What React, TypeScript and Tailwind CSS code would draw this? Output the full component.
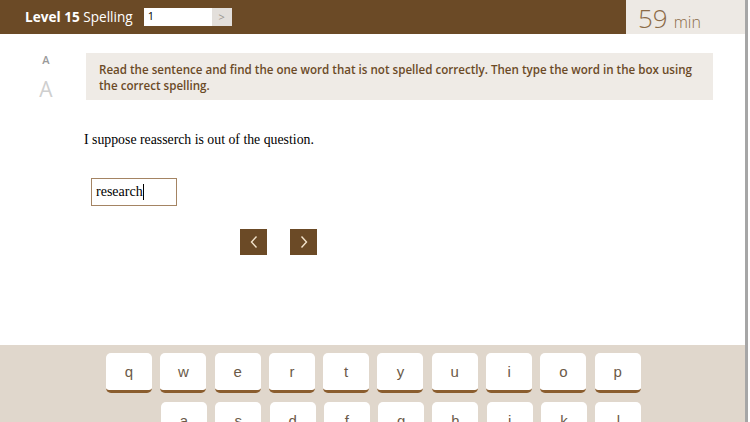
const topRow = ["q", "w", "e", "r", "t", "y", "u", "i", "o", "p"];
const midRow = ["a", "s", "d", "f", "g", "h", "j", "k", "l"];

function Key({ letter }: { letter: string }) {
    return (
        <div
            className="w-[46px] h-[40px] shrink-0 rounded-[5px] bg-white border-b-[3px] border-[#8a5d2e] flex items-center justify-center pt-[2px] text-[15px] text-[#6b5a48]"
            style={{ fontFamily: '"Liberation Sans", sans-serif' }}
        >
            {letter}
        </div>
    );
}

function Chevron({ dir }: { dir: "left" | "right" }) {
    return (
        <svg width="10" height="14" viewBox="0 0 10 14" fill="none">
            <path
                d={dir === "left" ? "M7.5 1.5 L2.5 7 L7.5 12.5" : "M2.5 1.5 L7.5 7 L2.5 12.5"}
                stroke="#f3e4cc"
                strokeWidth="1.4"
            />
        </svg>
    );
}

function App() {
    return (
        <div className="w-[750px] h-[422px] overflow-hidden flex bg-white" style={{ fontFamily: '"Open Sans", sans-serif' }}>
            <div className="w-[745px] shrink-0 flex flex-col">
                {/* header */}
                <div className="h-[34px] shrink-0 bg-[#6b4a26] flex items-center">
                    <div className="pl-[25px] text-white text-[13.6px] leading-none">
                        <span className="font-bold">Level 15</span> Spelling
                    </div>
                    <div className="ml-[11px] h-[18px] w-[88px] flex">
                        <div className="w-[68px] bg-white text-[11px] text-black pl-[4px] leading-[16px]">1</div>
                        <div className="w-[20px] bg-[#e3dfdb] flex items-center justify-center text-[#9a9590] text-[11px]">&gt;</div>
                    </div>
                    <div className="ml-auto w-[119px] h-full bg-[#ede9e4] flex items-end pl-[12px] pb-[3px] text-[#8b6b47]">
                        <span className="text-[26px] font-light leading-none">59</span>
                        <span className="text-[16px] font-light ml-[6px] leading-none mb-[1px]">min</span>
                    </div>
                </div>

                {/* body */}
                <div className="h-[311px] shrink-0 flex flex-col">
                    <div className="flex pt-[19px]">
                        <div className="w-[86px] shrink-0 flex flex-col items-center pl-[6px]">
                            <span className="text-[11px] font-semibold text-[#9a9a9a] leading-none mt-[1px]">A</span>
                            <span className="text-[21px] text-[#cfcfcf] leading-none mt-[14px]">A</span>
                        </div>
                        <div className="w-[627px] h-[47px] bg-[#efebe6] pl-[13px] pr-[14px] pt-[9px] text-[11.6px] font-semibold text-[#6b4a26] leading-[16px]">
                            Read the sentence and find the one word that is not spelled correctly. Then type the word in the box using the correct spelling.
                        </div>
                    </div>
                    <div className="pl-[84px] mt-[33px] text-[13.8px] text-black leading-none" style={{ fontFamily: '"Liberation Serif", serif' }}>
                        I suppose reasserch is out of the question.
                    </div>
                    <div className="pl-[91px] mt-[31px]">
                        <div className="w-[86px] h-[28px] border border-[#a48463] flex items-center pl-[4px] text-[14px] text-black" style={{ fontFamily: '"Liberation Serif", serif' }}>
                            research<span className="w-px h-[16px] bg-black" />
                        </div>
                    </div>
                    <div className="flex pl-[240px] gap-[23px] mt-[23px]">
                        <button className="w-[27px] h-[26px] bg-[#6b4a26] flex items-center justify-center">
                            <Chevron dir="left" />
                        </button>
                        <button className="w-[27px] h-[26px] bg-[#6b4a26] flex items-center justify-center">
                            <Chevron dir="right" />
                        </button>
                    </div>
                </div>

                {/* keyboard */}
                <div className="flex-1 bg-[#e0d7cc] pt-[8px] flex flex-col gap-[9px]">
                    <div className="flex gap-[8.3px] pl-[106px]">
                        {topRow.map((k) => (
                            <Key key={k} letter={k} />
                        ))}
                    </div>
                    <div className="flex gap-[8.3px] pl-[161px]">
                        {midRow.map((k) => (
                            <Key key={k} letter={k} />
                        ))}
                    </div>
                </div>
            </div>
            <div className="w-[3px] shrink-0 bg-[#a6a6a6]" />
            <div className="w-[2px] shrink-0 bg-white" />
        </div>
    );
}

export default App;
